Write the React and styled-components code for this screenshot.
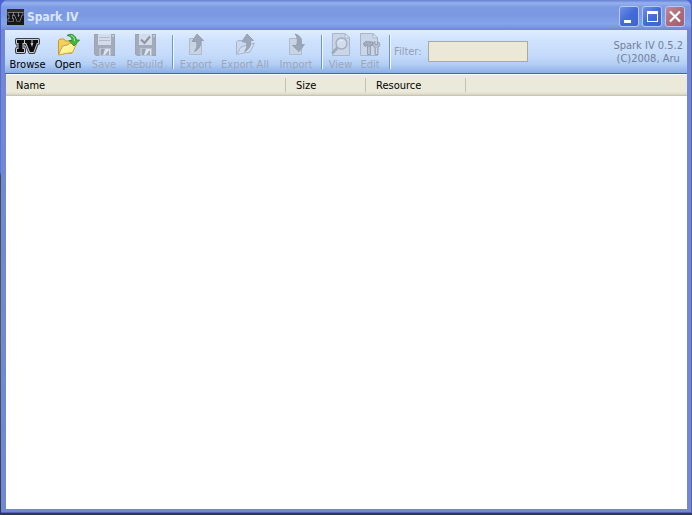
import React, { useState } from 'react';
import styled, { createGlobalStyle } from 'styled-components';

const GlobalStyle = createGlobalStyle`
  * {
    box-sizing: border-box;
  }
  body {
    margin: 0;
    font-family: "DejaVu Sans Condensed", "DejaVu Sans", sans-serif;
    font-size: 11px;
    color: #000;
  }
`
const Desktop = styled.div`
  height: 100vh;
  padding: 0 0 2px 1px;
  background: linear-gradient(#4c62d8 0, #5b74de 172px, #33504e 176px, #45615a 340px, #2c3b50 100%);
`
const Window = styled.div`
  display: flex;
  flex-direction: column;
  height: 100%;
  padding: 0 4px 3px 4px;
  border: solid #5562b4;
  border-width: 0 1px 1px 0;
  border-radius: 7px 7px 0 0;
  background: #7388d3;
`
const TitleBar = styled.header`
  display: flex;
  flex: none;
  align-items: center;
  gap: 3px;
  height: 30px;
  margin: 0 -4px;
  padding: 3px 6px 0 6px;
  border-radius: 7px 7px 0 0;
  background: linear-gradient(#6680d0 0, #95b1ee 3px, #7c9be3 7px, #7b99e2 15px, #82a4ea 24px, #7b96df 27px, #7285d2 30px);
`
const Title = styled.h1`
  flex: 1;
  margin: 0;
  font-size: 12px;
  font-weight: bold;
  color: #dce6f9;
`
const Controls = styled.div`
  display: flex;
  gap: 3px;
`
const ControlButton = styled.button`
  display: flex;
  width: 20px;
  height: 21px;
  padding: 0;
  align-items: center;
  justify-content: center;
  border: 1px solid #b9c9f3;
  border-radius: 3px;
  background: ${({ $close }) => $close
    ? 'linear-gradient(135deg, #c08a9c, #b06a78 50%, #a55d70)'
    : 'linear-gradient(135deg, #6f90e6, #436bd9 50%, #3e62d6)'};
`
const Toolbar = styled.div`
  display: flex;
  flex: none;
  height: 44px;
  border-bottom: 1px solid #46689c;
  background: linear-gradient(#e0edff 0, #cfe2fd 10px, #c5dbfa 25px, #b4cff5 34px, #8baee6 43px);
`
const ToolButton = styled.button`
  display: flex;
  flex: none;
  flex-direction: column;
  align-items: center;
  width: ${({ $width }) => $width}px;
  padding: 3px 0 0;
  border: none;
  background: none;
  font: inherit;
  line-height: 16px;
  white-space: nowrap;
  color: #000;

  svg {
    flex: none;
  }
  &:disabled {
    color: #9da7b8;
  }
`
const Separator = styled.div`
  flex: none;
  width: 2px;
  height: 34px;
  margin: 5px 3px 0 4px;
  border-left: 1px solid #6c96c8;
  border-right: 1px solid #f2f8ff;
`
const Filter = styled.label`
  display: flex;
  flex: none;
  align-items: center;
  gap: 6px;
  color: #939eb0;
`
const FilterInput = styled.input`
  width: 100px;
  height: 21px;
  padding: 0 3px;
  border: 1px solid #a7ab9f;
  background: #ebe8d7;
  font: inherit;
`
const About = styled.div`
  margin-left: auto;
  padding: 9px 4px 0 8px;
  text-align: center;
  line-height: 13px;
  white-space: nowrap;
  color: #71809c;
`
const ListView = styled.main`
  flex: 1;
  min-height: 0;
  margin-left: 1px;
  overflow: hidden;
  background: #fff;
`
const FileTable = styled.table`
  width: 100%;
  table-layout: fixed;
  border-collapse: separate;
  border-spacing: 0;
`
const ColumnHead = styled.th`
  width: ${({ $width }) => $width ? `${$width}px` : 'auto'};
  height: 22px;
  padding: 3px 0 3px;
  border-top: 1px solid #fbfaf5;
  border-bottom: 1px solid #c8c5b5;
  background: linear-gradient(#ebe9d9 0, #ebe9d9 17px, #d8d4c3 20px);
  font-weight: normal;
  text-align: left;
`
const HeadLabel = styled.div`
  height: 14px;
  padding-left: 10px;
  line-height: 16px;
  border-right: ${({ $last }) => $last ? 'none' : '1px solid #c5c2b1'};
  box-shadow: ${({ $last }) => $last ? 'none' : '1px 0 #fff'};
`

const Icon = ({ children }) => (
  <svg width="24" height="24" viewBox="0 0 24 24" aria-hidden="true">{children}</svg>
)

const IvShape = () => (
  <>
    <path d="M2 7H9V10H7.500V16H9V19H2V16H3.500V10H2Z" />
    <path d="M10 7H16.500V10H15.500L17 14L18.300 10H17.500V7H23V10H21.800L18.500 19H15L11.300 10H10Z" />
  </>
)

const BrowseIcon = () => (
  <svg width="26" height="24" viewBox="0 0 26 24" aria-hidden="true">
    <g strokeLinejoin="round">
      <g fill="#3a3d44" stroke="#3a3d44" strokeWidth="4"><IvShape /></g>
      <g fill="#c6c9d0" stroke="#c6c9d0" strokeWidth="2"><IvShape /></g>
      <g fill="#0c0c0e"><IvShape /></g>
    </g>
  </svg>
)

const AppIcon = () => (
  <svg width="17" height="16" viewBox="0 0 17 16" aria-hidden="true">
    <rect width="17" height="16" fill="#161616" />
    <path d="M0 0H17V4H0Z" fill="#2c2c2c" />
    <g transform="translate(0 -1) scale(.68 .68)">
      <g fill="#999" stroke="#999" strokeWidth="2"><IvShape /></g>
      <g fill="#151515"><IvShape /></g>
    </g>
  </svg>
)

const OpenIcon = () => (
  <Icon>
    <path d="M2.500 21V7.500L4 6H8L9.500 8H16V20Z" fill="#f4cf59" stroke="#c79a2d" />
    <path d="M2.500 22L6.500 13L12 12L13.500 10L20.500 11L16.500 19.500L10 20.500Z" fill="#fff09a" stroke="#cda43a" strokeLinejoin="round" />
    <path d="M5 19L8 14L13 13" stroke="#fffbd2" fill="none" />
    <path d="M11 2.500C14.500 0 19.500 1.500 20.500 7H23.500L18 13L13 7.500H16C16 4.500 14.500 3 11 2.500Z" fill="#45b93c" stroke="#267f30" strokeWidth=".8" strokeLinejoin="round" />
    <path d="M15 2.500C17.500 3 18.500 5 18.500 8" stroke="#a2e983" fill="none" />
  </Icon>
)

const Disk = ({ children }) => (
  <Icon>
    <path d="M2 1H23V23H4L2 21Z" fill="#a3abbb" />
    <path d="M2.500 1.500H22.500V22.500H4L2.500 21Z" fill="none" stroke="#9ba4b5" />
    <path d="M6 1H19V12H6Z" fill="#d3dcea" />
    <path d="M7 15H19V23H7Z" fill="#b9c3d3" />
    <path d="M9 16H18V22H9Z" fill="#dde5f0" />
    <path d="M9 16H13L11 22H9Z" fill="#98a2b4" />
    <path d="M13 22L17 17V22Z" fill="#9fa9ba" />
    <path d="M20 2H22V4H20Z" fill="#c3cad7" />
    {children}
  </Icon>
)

const SaveIcon = () => (
  <Disk>
    <path d="M7 4.500H18M7 7.500H18" stroke="#b4bdcb" />
  </Disk>
)

const RebuildIcon = () => (
  <Disk>
    <path d="M8 6.500L11.500 10L17 3.500" fill="none" stroke="#8b94a7" strokeWidth="2" />
  </Disk>
)

const Sheet = () => (
  <path d="M5.500 5.500H17.500V21.500H5.500Z" fill="#c8d3e4" stroke="#b0bac9" />
)

const UpArrow = () => (
  <path d="M13 1L19.500 7.500H16.500C17.500 12.500 15 16.500 10.500 18.500C13 15 13.500 11.500 12 8.500H8Z" fill="#9ca6b7" stroke="#8f9aac" strokeWidth=".8" strokeLinejoin="round" />
)

const ExportIcon = () => (
  <Icon>
    <Sheet />
    <UpArrow />
  </Icon>
)

const ExportAllIcon = () => (
  <Icon>
    <path d="M3.500 21V9L5 7.500H9L10.500 9.500H17V19" fill="#c8d8ef" stroke="#a9b5c8" />
    <path d="M3.500 21.500L8 14L14 12L21.500 10L17 19L11 20Z" fill="#cfddf1" stroke="#a9b5c8" strokeLinejoin="round" />
    <g transform="translate(1 0)"><UpArrow /></g>
  </Icon>
)

const ImportIcon = () => (
  <Icon>
    <Sheet />
    <path d="M11 1C16 2 18 6 17 11.500H20.500L15 18.500L8.500 12.500H12.500C14 8 13.500 4 11 1Z" fill="#9ca6b7" stroke="#8f9aac" strokeWidth=".8" strokeLinejoin="round" />
  </Icon>
)

const Page = () => (
  <>
    <path d="M3.500 .5H16L20.500 5V22.500H3.500Z" fill="#c9d5e8" stroke="#aab5c6" />
    <path d="M16 .5V5H20.500Z" fill="#e5edf8" stroke="#aab5c6" />
  </>
)

const ViewIcon = () => (
  <Icon>
    <Page />
    <path d="M8.500 14.500L4 19.500" stroke="#a1abbc" strokeWidth="3" strokeLinecap="round" />
    <circle cx="12.500" cy="10.500" r="5.500" fill="#d0dced" stroke="#a3aebf" strokeWidth="1.400" />
    <path d="M9.500 9.500C10 8 12 7 14 7.500" fill="none" stroke="#edf4ff" />
  </Icon>
)

const EditIcon = () => (
  <svg width="26" height="24" viewBox="0 0 26 24" aria-hidden="true">
    <Page />
    <path d="M6.500 12C6.500 9 9 8 11 8.500L15.500 9V12.500H13.500V21.500H10.500V12.500H8.500V13.500Z" fill="#a3adbd" stroke="#8d98aa" strokeWidth=".8" />
    <path d="M18 8.500V11.500H20.500V8.500C23.500 9.500 23.500 13.500 21 14.500V21.500H18V14.500C15 13.500 15 9.500 18 8.500Z" fill="#b5bfce" stroke="#8d98aa" strokeWidth=".8" />
    <path d="M12 14V21M19.500 15V21" stroke="#d0d9e6" />
  </svg>
)

const toolGroups = [
  [
    { label: 'Browse', width: 45, icon: BrowseIcon, enabled: true },
    { label: 'Open', width: 36, icon: OpenIcon, enabled: true },
    { label: 'Save', width: 36, icon: SaveIcon },
    { label: 'Rebuild', width: 46, icon: RebuildIcon },
  ],
  [
    { label: 'Export', width: 38, icon: ExportIcon },
    { label: 'Export All', width: 60, icon: ExportAllIcon },
    { label: 'Import', width: 42, icon: ImportIcon },
  ],
  [
    { label: 'View', width: 29, icon: ViewIcon },
    { label: 'Edit', width: 30, icon: EditIcon },
  ],
]

const columns = [
  { label: 'Name', width: 280 },
  { label: 'Size', width: 80 },
  { label: 'Resource', width: 100 },
  { label: '' },
]

export default function App() {
  const [filter, setFilter] = useState('');

  return (
    <Desktop>
      <GlobalStyle />
      <Window>
        <TitleBar>
          <AppIcon />
          <Title>Spark IV</Title>
          <Controls>
            <ControlButton aria-label="Minimize">
              <svg width="18" height="19" viewBox="0 0 18 19"><path d="M4 13H11V16H4Z" fill="#fff" /></svg>
            </ControlButton>
            <ControlButton aria-label="Maximize">
              <svg width="18" height="19" viewBox="0 0 18 19"><path d="M4 4H15V15H4ZM5 7V14H14V7Z" fill="#fff" fillRule="evenodd" /></svg>
            </ControlButton>
            <ControlButton $close aria-label="Close">
              <svg width="18" height="19" viewBox="0 0 18 19"><path d="M4 4.500L14 14.500M14 4.500L4 14.500" stroke="#fff" strokeWidth="2.200" /></svg>
            </ControlButton>
          </Controls>
        </TitleBar>
        <Toolbar>
          {toolGroups.map((group, index) => (
            <React.Fragment key={index}>
              {group.map(({ label, width, icon: ToolIcon, enabled }) => (
                <ToolButton key={label} $width={width} disabled={!enabled}>
                  <ToolIcon />
                  {label}
                </ToolButton>
              ))}
              <Separator />
            </React.Fragment>
          ))}
          <Filter>
            Filter:
            <FilterInput
              value={filter}
              disabled
              onChange={(event) => { setFilter(event.target.value) }}
            />
          </Filter>
          <About>
            Spark IV 0.5.2<br />
            (C)2008, Aru
          </About>
        </Toolbar>
        <ListView>
          <FileTable>
            <thead>
              <tr>
                {columns.map(({ label, width }) => (
                  <ColumnHead key={label} $width={width}>
                    <HeadLabel $last={!width}>{label}</HeadLabel>
                  </ColumnHead>
                ))}
              </tr>
            </thead>
          </FileTable>
        </ListView>
      </Window>
    </Desktop>
  );
}
